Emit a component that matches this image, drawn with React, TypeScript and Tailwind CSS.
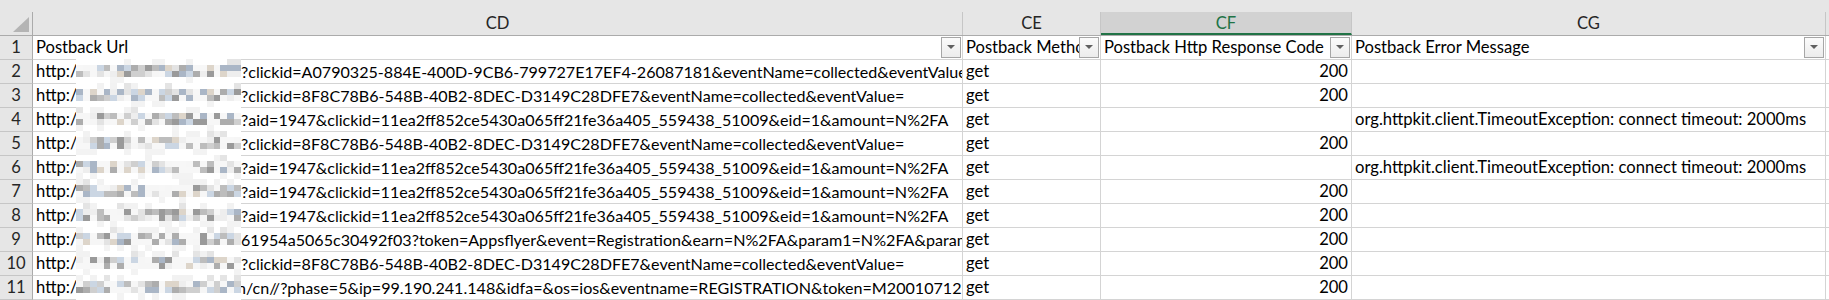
import React from 'react'

/**
 * Excel sheet fragment: postback log columns CD–CG, rows 1–11
 */

const rows = [
  { url: '?clickid=A0790325-884E-400D-9CB6-799727E17EF4-26087181&eventName=collected&eventValue=', method: 'get', code: '200', error: '' },
  { url: '?clickid=8F8C78B6-548B-40B2-8DEC-D3149C28DFE7&eventName=collected&eventValue=', method: 'get', code: '200', error: '' },
  { url: '?aid=1947&clickid=11ea2ff852ce5430a065ff21fe36a405_559438_51009&eid=1&amount=N%2FA', method: 'get', code: '', error: 'org.httpkit.client.TimeoutException: connect timeout: 2000ms' },
  { url: '?clickid=8F8C78B6-548B-40B2-8DEC-D3149C28DFE7&eventName=collected&eventValue=', method: 'get', code: '200', error: '' },
  { url: '?aid=1947&clickid=11ea2ff852ce5430a065ff21fe36a405_559438_51009&eid=1&amount=N%2FA', method: 'get', code: '', error: 'org.httpkit.client.TimeoutException: connect timeout: 2000ms' },
  { url: '?aid=1947&clickid=11ea2ff852ce5430a065ff21fe36a405_559438_51009&eid=1&amount=N%2FA', method: 'get', code: '200', error: '' },
  { url: '?aid=1947&clickid=11ea2ff852ce5430a065ff21fe36a405_559438_51009&eid=1&amount=N%2FA', method: 'get', code: '200', error: '' },
  { url: '61954a5065c30492f03?token=Appsflyer&event=Registration&earn=N%2FA&param1=N%2FA&param2=N%2FA', method: 'get', code: '200', error: '' },
  { url: '?clickid=8F8C78B6-548B-40B2-8DEC-D3149C28DFE7&eventName=collected&eventValue=', method: 'get', code: '200', error: '' },
  { url: 'n/cn//?phase=5&ip=99.190.241.148&idfa=&os=ios&eventname=REGISTRATION&token=M20010712', method: 'get', code: '200', error: '' },
]

// pixelated blur over the host names
const shades = ['#9a9a9a', '#adadad', '#bdbdbd', '#cfcfcf', '#aab6c6', '#cbd6e3', '#ddd5ca', '#e3e3e3', '#eeeeee', '#f6f6f6']
function Mosaic() {
  let seed = 7
  const rnd = () => {
    seed = (seed * 9301 + 49297) % 233280
    return seed / 233280
  }
  const cells: React.ReactElement[] = []
  const cols = 24
  const cw = 165 / cols
  for (let r = 0; r < 10; r++) {
    for (let s = 0; s < 4; s++) {
      for (let c = 0; c < cols; c++) {
        const v = rnd()
        let fill = '#ffffff'
        if (s === 1 || s === 2) {
          fill = v < 0.2 ? '#f7f7f7' : shades[Math.floor(rnd() * shades.length)]
        } else if (s === 0) {
          fill = v < 0.65 ? '#ffffff' : v < 0.88 ? '#f2f2f2' : '#e4e4e4'
        } else {
          fill = v < 0.75 ? '#ffffff' : '#f3f3f3'
        }
        cells.push(<rect key={`${r}-${s}-${c}`} x={c * cw} y={r * 24 + s * 6} width={cw + 0.5} height={6.5} fill={fill} />)
      }
    }
  }
  return (
    <svg width="165" height="241" viewBox="0 0 165 241" shapeRendering="crispEdges">
      <rect width="165" height="241" fill="#fff" />
      {cells}
    </svg>
  )
}

function FilterButton() {
  return (
    <div className="absolute right-[1px] top-[1px] flex h-[21px] w-[20px] items-center justify-center border border-[#a6a6a6] bg-gradient-to-b from-[#fbfbfb] to-[#ececec]">
      <svg width="8" height="5" viewBox="0 0 8 5">
        <polygon points="0,0 8,0 4,4" fill="#606060" />
      </svg>
    </div>
  )
}

export default function App() {
  const cell = 'relative h-[24px] shrink-0 overflow-hidden whitespace-nowrap border-b border-r border-[#d4d4d4] leading-[23px]'
  return (
    <div className="relative h-[300px] w-[1829px] overflow-hidden bg-white font-['Lato','Liberation_Sans',sans-serif] text-[16.6px] text-black">
      <div className="h-[12px] bg-[#e6e6e6]"></div>

      {/* Column letters */}
      <div className="flex h-[24px] border-b border-[#ababab] bg-[#e6e6e6] leading-[23px] text-[#262626]">
        <div className="relative w-[33px] shrink-0 border-r border-[#ababab]">
          <svg className="absolute left-[13px] top-[5px]" width="16" height="15" viewBox="0 0 16 15">
            <polygon points="16,0 16,15 0,15" fill="#b4b4b4" />
          </svg>
        </div>
        <div className="w-[930px] shrink-0 border-r border-[#c6c6c6] text-center">CD</div>
        <div className="w-[138px] shrink-0 border-r border-[#c6c6c6] text-center">CE</div>
        <div className="w-[251px] shrink-0 border-b-2 border-r border-b-[#217346] border-r-[#c6c6c6] bg-[#d2d2d2] text-center text-[#217346]">CF</div>
        <div className="w-[474px] shrink-0 border-r border-[#c6c6c6] text-center">CG</div>
        <div className="flex-1"></div>
      </div>

      {/* Header row */}
      <div className="flex">
        <div className="h-[24px] w-[33px] shrink-0 border-b border-r border-b-[#c6c6c6] border-r-[#ababab] bg-[#e6e6e6] text-center leading-[23px] text-[#262626]">1</div>
        <div className={`${cell} w-[930px] pl-[3px]`}>
          Postback Url
          <FilterButton />
        </div>
        <div className={`${cell} w-[138px] pl-[3px]`}>
          Postback Method
          <FilterButton />
        </div>
        <div className={`${cell} w-[251px] pl-[3px]`}>
          Postback Http Response Code
          <FilterButton />
        </div>
        <div className={`${cell} w-[474px] pl-[3px]`}>
          Postback Error Message
          <FilterButton />
        </div>
        <div className="h-[24px] flex-1 border-b border-[#d4d4d4]"></div>
      </div>

      {rows.map((row, i) => (
        <div key={i} className="flex">
          <div className="h-[24px] w-[33px] shrink-0 border-b border-r border-b-[#c6c6c6] border-r-[#ababab] bg-[#e6e6e6] text-center leading-[23px] text-[#262626]">
            {i + 2}
          </div>
          <div className={`${cell} flex w-[930px] pl-[3px] text-[16.1px]`}>
            <span className="w-[40px] shrink-0 text-[16.6px]">http:/</span>
            <span className="w-[165px] shrink-0"></span>
            <span className={row.url.startsWith('n/') ? '-ml-[4px]' : ''}>{row.url}</span>
          </div>
          <div className={`${cell} w-[138px] pl-[3px]`}>{row.method}</div>
          <div className={`${cell} w-[251px] pr-[3px] text-right`}>{row.code}</div>
          <div className={`${cell} w-[474px] pl-[3px]`}>{row.error}</div>
          <div className="h-[24px] flex-1 border-b border-[#d4d4d4]"></div>
        </div>
      ))}

      {/* redaction over host names */}
      <div className="absolute left-[76px] top-[59px]">
        <Mosaic />
      </div>
    </div>
  )
}
